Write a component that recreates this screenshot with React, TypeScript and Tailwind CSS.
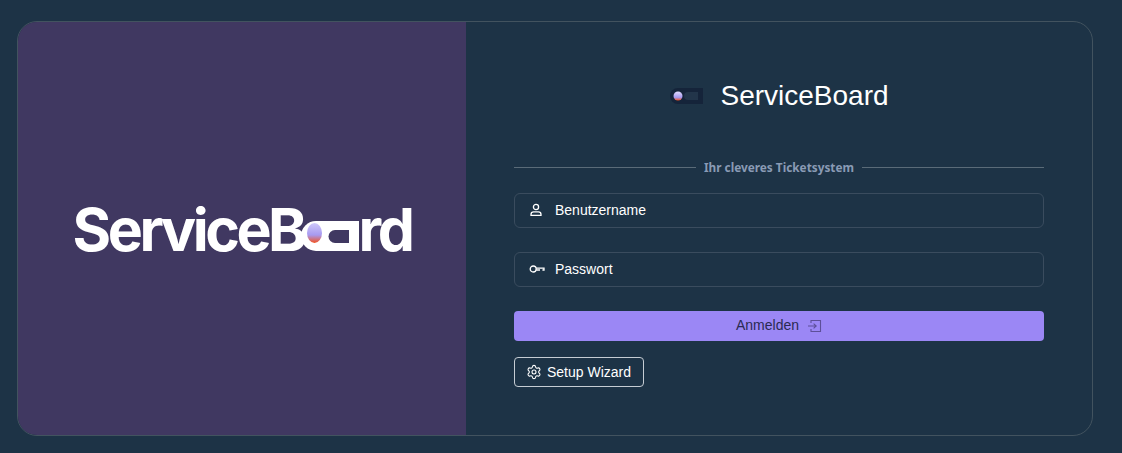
import { Settings } from "lucide-react";

const BigLogo = () => (
	<div className="flex items-end pt-[3px] font-['Inter',sans-serif] text-[59px] leading-[60px] font-bold tracking-[-3.5px] text-white">
		<span>ServiceB</span>
		<svg width="58" height="30" viewBox="0 0 58 30" className="-ml-[3px] mb-[9px] shrink-0">
			<defs>
				<linearGradient id="dotBig" x1="0" y1="0" x2="0" y2="1">
					<stop offset="0" stopColor="#cfc8fb" />
					<stop offset="0.6" stopColor="#a79af0" />
					<stop offset="1" stopColor="#f4511e" />
				</linearGradient>
			</defs>
			<path d="M15 0H58V30H15a15 15 0 0 1 0-30Z" fill="#fff" />
			<path d="M34 9H48V22H34a6.5 6.5 0 0 1 0-13Z" fill="#403861" />
			<ellipse cx="13.5" cy="12" rx="7.5" ry="10" fill="url(#dotBig)" />
		</svg>
		<span>rd</span>
	</div>
);

const SmallLogo = () => (
	<svg width="36" height="18" viewBox="0 0 36 18" className="shrink-0">
		<defs>
			<linearGradient id="dotSmall" x1="0" y1="0" x2="0" y2="1">
				<stop offset="0" stopColor="#e3dcff" />
				<stop offset="0.65" stopColor="#a79af0" />
				<stop offset="1" stopColor="#f4511e" />
			</linearGradient>
		</defs>
		<path d="M9 1H34V17H9a8 8 0 0 1 0-16Z" fill="#15243a" />
		<path d="M19 5H29V13H19a4 4 0 0 1 0-8Z" fill="#22354a" />
		<circle cx="9" cy="9" r="4.5" fill="url(#dotSmall)" />
	</svg>
);

const UserGlyph = () => (
	<svg width="14" height="14" viewBox="0 0 14 14" fill="none" stroke="currentColor" strokeWidth="1.3">
		<circle cx="7" cy="4" r="2.6" />
		<path d="M2 12.3v-.8a2.6 2.6 0 0 1 2.6-2.6h4.8a2.6 2.6 0 0 1 2.6 2.6v.8Z" />
	</svg>
);

const KeyGlyph = () => (
	<svg width="16" height="14" viewBox="0 0 16 14" fill="none" stroke="currentColor" strokeWidth="1.3">
		<circle cx="4.2" cy="7" r="3" />
		<path d="M7.2 6.2H15V8H13.4M11 8H7.2" />
	</svg>
);

const SignInGlyph = () => (
	<svg width="14" height="14" viewBox="0 0 14 14" fill="none" stroke="currentColor" strokeWidth="1.1">
		<path d="M3 4V1.5h9.5v11H3V10" />
		<path d="M0 7h8M5.6 4.6 8.2 7l-2.6 2.4" />
	</svg>
);

const Field = ({ label, icon }: { label: string; icon: JSX.Element }) => (
	<div className="flex h-[35px] items-center rounded-md border border-[#3a4c5e] pl-[14px]">
		<span className="flex w-[26px] text-white">{icon}</span>
		<span className="text-[14px] text-white">{label}</span>
	</div>
);

export default function App() {
	return (
		<div className="h-[453px] bg-[#1d3346] px-[17px] py-[21px] font-['Liberation_Sans',sans-serif]">
			<div className="flex h-[415px] w-[1076px] overflow-hidden rounded-[20px] border border-[#42535f]">
				<div className="flex w-[448px] items-center justify-center bg-[#403861]">
					<BigLogo />
				</div>
				<div className="flex flex-1 flex-col px-[48px]">
					<div className="mt-[56px] flex h-[36px] items-center justify-center gap-[15px]">
						<SmallLogo />
						<span className="text-[28px] text-white">ServiceBoard</span>
					</div>
					<div className="mt-[45px] flex items-center gap-2">
						<div className="h-px flex-1 bg-[#5a6b78]" />
						<span className="font-['Noto_Sans',sans-serif] text-[11.8px] font-bold text-[#8a9bb5]">
							Ihr cleveres Ticketsystem
						</span>
						<div className="h-px flex-1 bg-[#5a6b78]" />
					</div>
					<div className="mt-[16px] flex flex-col gap-[24px]">
						<Field label="Benutzername" icon={<UserGlyph />} />
						<Field label="Passwort" icon={<KeyGlyph />} />
					</div>
					<button className="mt-[24px] flex h-[30px] items-center justify-center gap-[9px] rounded-[4px] bg-[#9b87f5] text-[14px] text-[#2a2a52]">
						Anmelden <span className="text-[#5d4f99]"><SignInGlyph /></span>
					</button>
					<button className="mt-[16px] flex h-[30px] w-[130px] items-center gap-[5px] rounded-[4px] border border-[#c5ccd3] pl-[11px] text-[14px] text-white">
						<Settings size={16} strokeWidth={1.6} /> <span className="pt-px">Setup Wizard</span>
					</button>
				</div>
			</div>
		</div>
	);
}
